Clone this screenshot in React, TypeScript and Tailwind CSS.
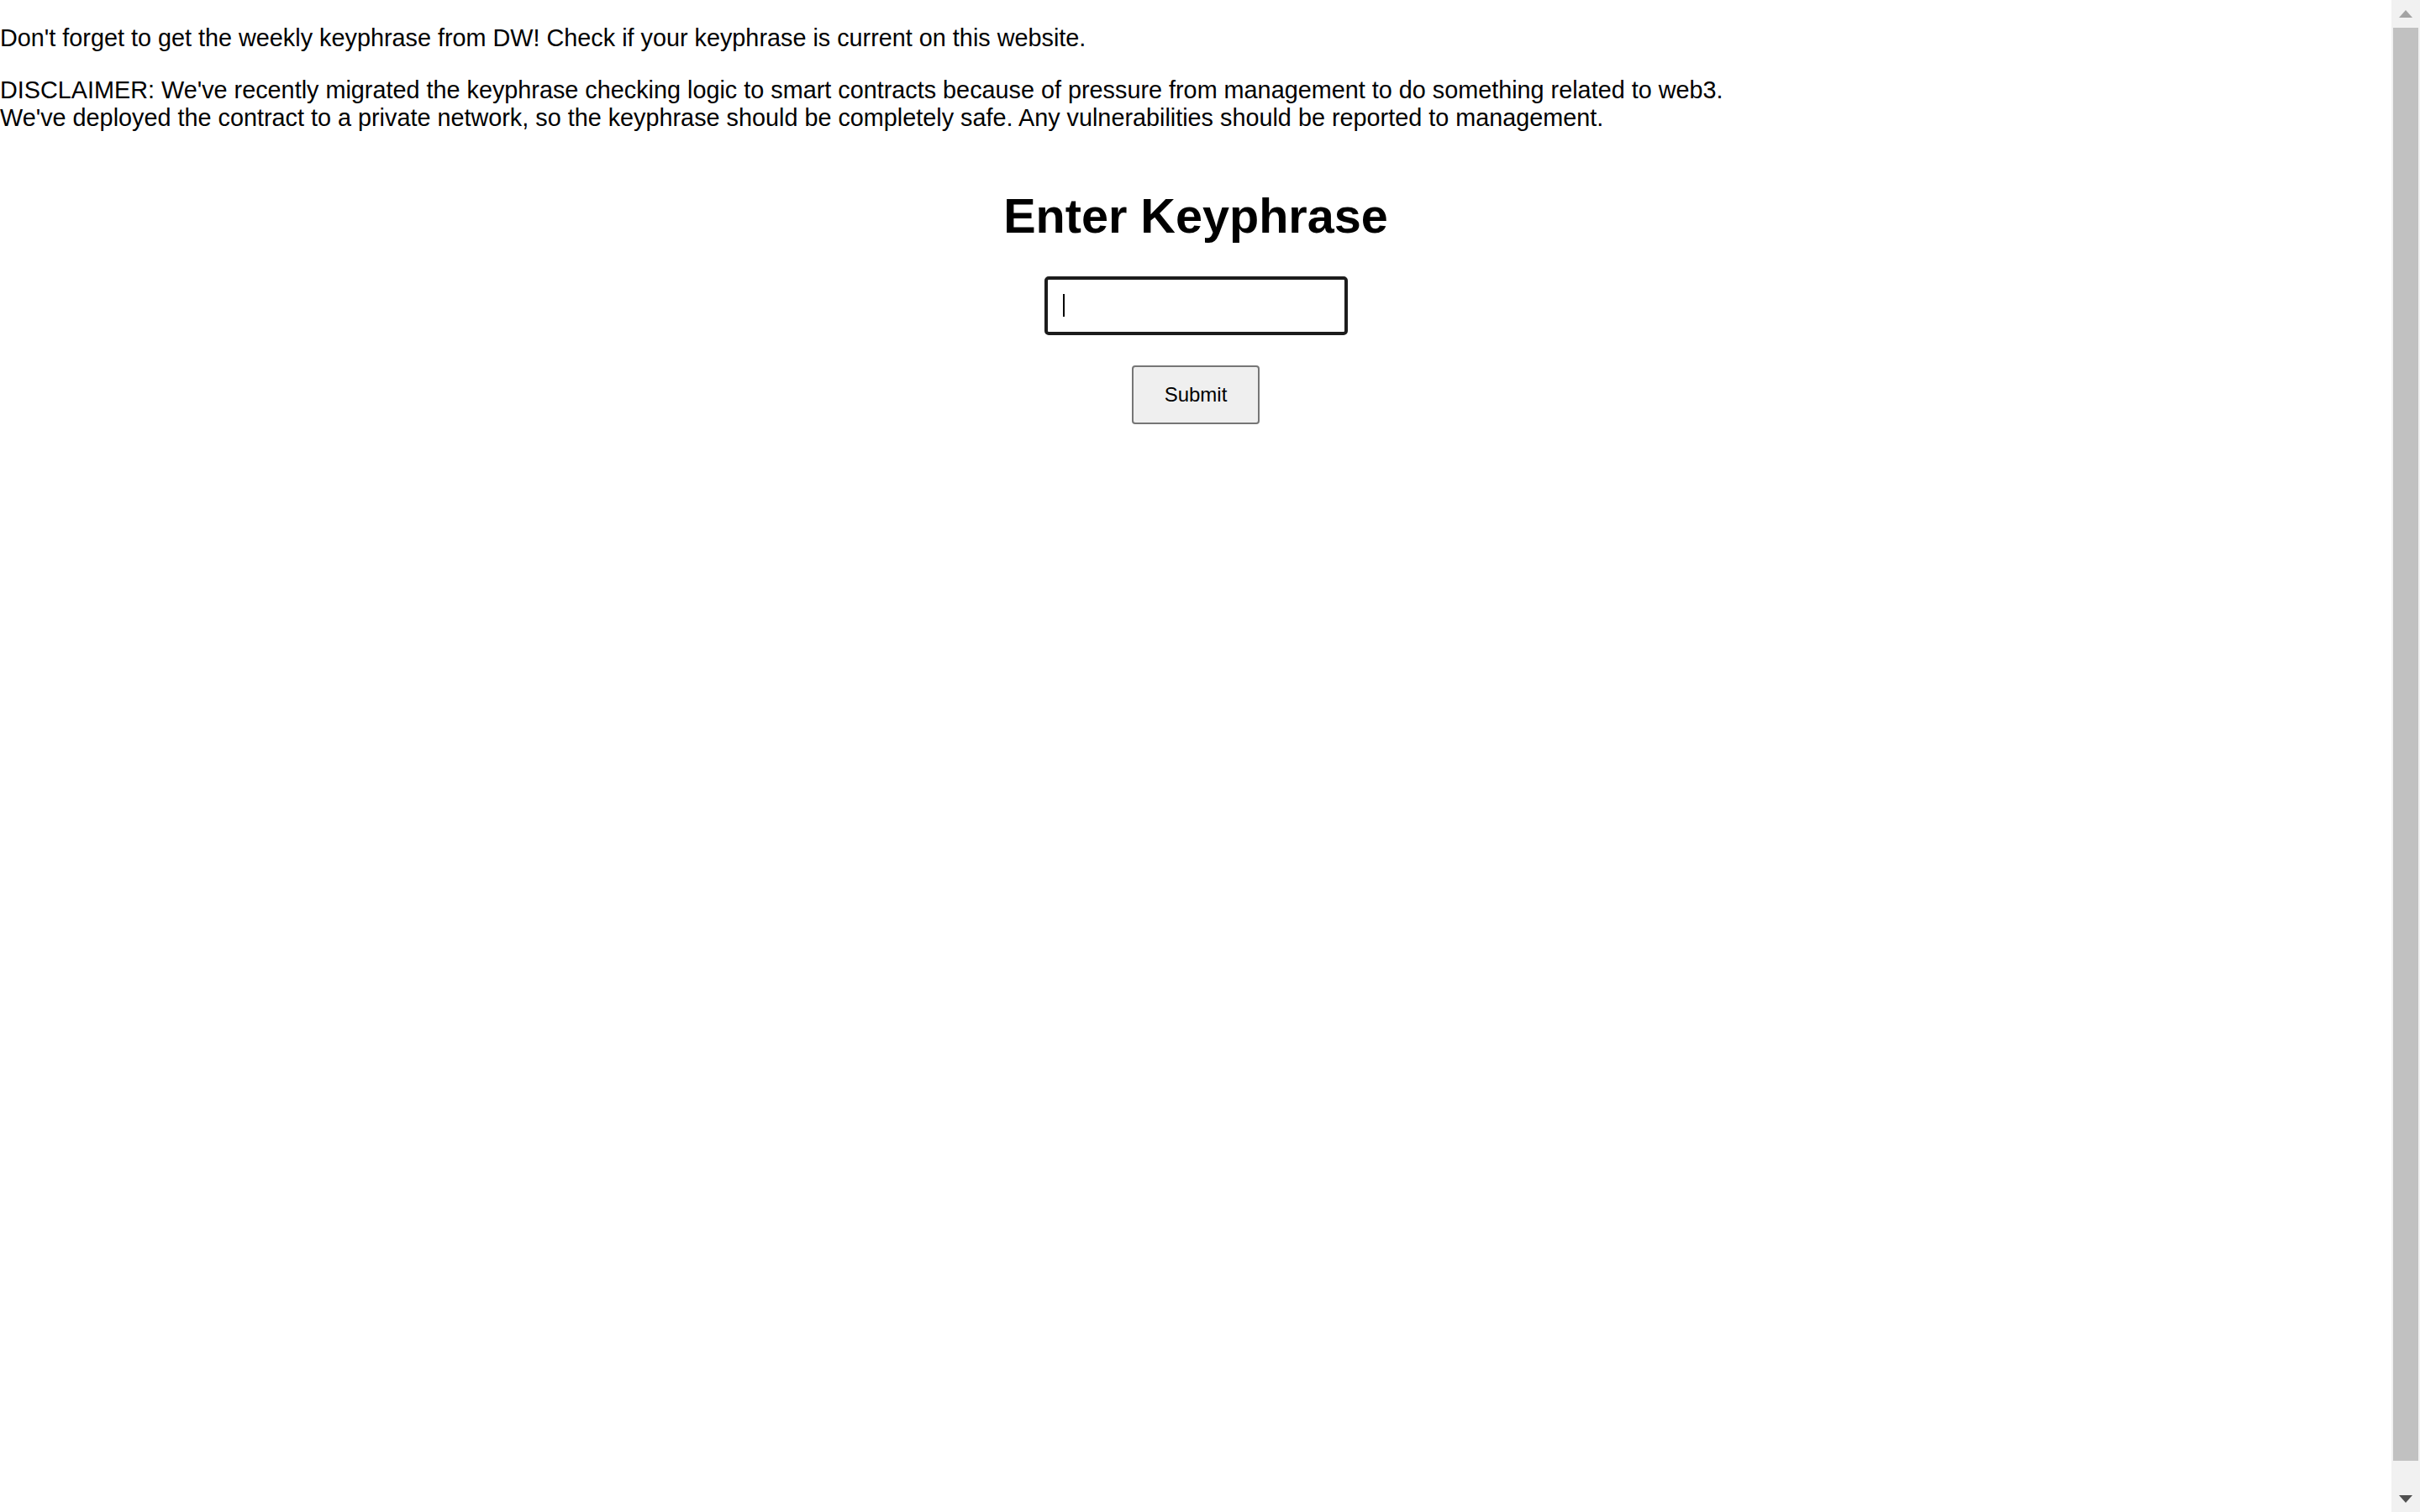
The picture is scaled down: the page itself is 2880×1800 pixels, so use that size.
import React from "react";

const pText = "m-0 py-[28.8px] text-[28.8px] leading-[normal] text-black";

function Scrollbar() {
  return (
    <div className="flex w-[34px] shrink-0 flex-col bg-[#f1f1f1]">
      <div className="flex h-[33px] items-center justify-center">
        <div className="h-0 w-0 border-x-[8px] border-b-[9px] border-x-transparent border-b-[#a3a3a3]" />
      </div>
      <div className="flex flex-1 flex-col">
        <div className="mx-[2px] h-[1706px] bg-[#c1c1c1]" />
      </div>
      <div className="flex h-[33px] items-center justify-center pt-[1px]">
        <div className="h-0 w-0 border-x-[8px] border-t-[9px] border-x-transparent border-t-[#505050]" />
      </div>
    </div>
  );
}

export default function App() {
  return (
    <div className="flex h-[1800px] w-full overflow-hidden bg-white font-['Liberation_Sans',Arial,sans-serif]">
      <div className="flex-1">
        <p className={`${pText} pb-0`}>
          Don't forget to get the weekly keyphrase from DW! Check if your keyphrase is current on this website.
        </p>
        <p className={pText}>
          DISCLAIMER: We've recently migrated the keyphrase checking logic to smart contracts because of pressure from
          management to do something related to web3.
          <br />
          We've deployed the contract to a private network, so the keyphrase should be completely safe. Any
          vulnerabilities should be reported to management.
        </p>

        <div className="flex flex-col items-center pt-[38.4px]">
          <h1 className="m-0 text-[57.6px] font-bold leading-[normal] text-black">Enter Keyphrase</h1>

          <div className="relative mt-[38.8px]">
            <input
              type="text"
              aria-label="Keyphrase"
              className="block h-[70px] w-[361px] rounded-[5px] border-[4px] border-[#1c1c1c] bg-white px-[18px] text-[28.8px] text-black outline-none"
            />
            <span className="pointer-events-none absolute left-[22.5px] top-[21px] h-[27px] w-[2px] bg-black" />
          </div>

          <button
            type="button"
            className="mt-[36px] h-[70px] w-[152px] rounded-[4px] border-[2px] border-[#767676] bg-[#efefef] text-[24px] leading-[normal] text-black"
          >
            Submit
          </button>
        </div>
      </div>
      <Scrollbar />
    </div>
  );
}
